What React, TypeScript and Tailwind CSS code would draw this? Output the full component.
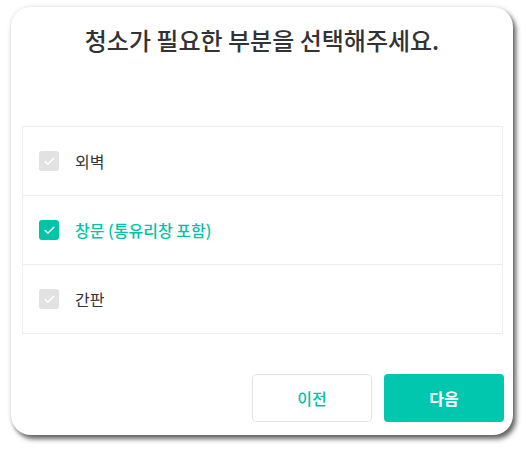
import { Check } from 'lucide-react';

const items = [
  { label: '외벽', checked: false },
  { label: '창문 (통유리창 포함)', checked: true },
  { label: '간판', checked: false },
];

export default function App() {
  return (
    <div
      className="w-[526px] h-[452px] bg-white pt-[7px] pl-[11px]"
      style={{ fontFamily: '"Noto Sans CJK KR", "Noto Sans", sans-serif' }}
    >
      <div className="w-[502px] h-[428px] rounded-[20px] bg-white shadow-[3px_4px_5px_rgba(0,0,0,0.6),0_0_5px_rgba(0,0,0,0.12)] flex flex-col px-[11px]">
        <h1 className="mt-[17px] text-center text-[24px] leading-[32px] font-medium text-[#333]">
          청소가 필요한 부분을 선택해주세요.
        </h1>

        <div className="mt-[70px] w-[481px] border border-[#eeeeee]">
          {items.map((item, i) => (
            <div
              key={item.label}
              className={`flex items-center gap-4 pl-[16px] ${i > 0 ? 'h-[69px] border-t border-[#eeeeee]' : 'h-[68px]'}`}
            >
              <span
                className={`w-5 h-5 rounded-[3px] flex items-center justify-center ${
                  item.checked ? 'bg-[#00c4a8]' : 'bg-[#e2e2e2]'
                }`}
              >
                <Check className="w-[13px] h-[13px] text-white" strokeWidth={3} />
              </span>
              <span
                className={`text-[16px] ${
                  item.checked ? 'text-[#00c4a8] font-medium' : 'text-[#333]'
                }`}
              >
                {item.label}
              </span>
            </div>
          ))}
        </div>

        <div className="mt-auto mb-[13px] flex justify-end gap-3">
          <button className="w-[120px] h-[48px] rounded-[4px] border border-[#e3e3e3] text-[16px] font-medium text-[#00c4a8]">
            이전
          </button>
          <button className="w-[120px] h-[48px] rounded-[4px] bg-[#00c7ad] text-[16px] font-bold text-white mr-[-2px]">
            다음
          </button>
        </div>
      </div>
    </div>
  );
}
